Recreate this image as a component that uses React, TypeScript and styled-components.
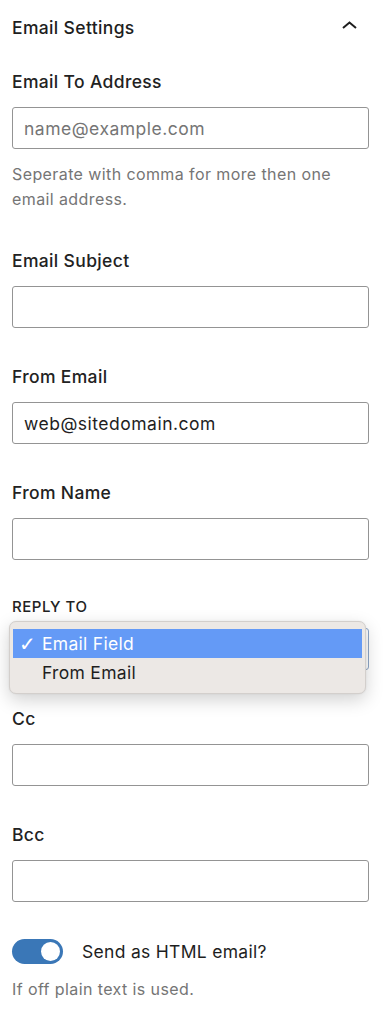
import React from "react";
import styled, { createGlobalStyle } from "styled-components";

const Global = createGlobalStyle`
  html, body { margin: 0; padding: 0; background: #fff; }
  body { font-family: Inter, "Noto Sans", "Liberation Sans", sans-serif; color: #1e1e1e; }
  * { box-sizing: border-box; }
`;

const Panel = styled.div`
  width: 385px;
  padding: 16px 16px 40px 12px;
  display: flex;
  flex-direction: column;
`;

const Header = styled.div`
  display: flex;
  align-items: center;
  justify-content: space-between;
  height: 24px;
  margin-bottom: 30px;
  padding-right: 12px;
`;

const Title = styled.h2`
  margin: 0;
  font-size: 17.5px;
  font-weight: 500;
  letter-spacing: 0.35px;
  line-height: 24px;
`;

const Fields = styled.div`
  display: flex;
  flex-direction: column;
  gap: 37px;
`;

const Group = styled.div`
  display: flex;
  flex-direction: column;
`;

const Label = styled.label<{ $upper?: boolean }>`
  display: block;
  font-size: ${(p) => (p.$upper ? "15px" : "17.5px")};
  font-weight: 500;
  letter-spacing: ${(p) => (p.$upper ? "0.5px" : "0.35px")};
  line-height: ${(p) => (p.$upper ? "20px" : "24px")};
  text-transform: ${(p) => (p.$upper ? "uppercase" : "none")};
  margin-bottom: ${(p) => (p.$upper ? "11px" : "13px")};
  color: #222;
`;

const Input = styled.input`
  width: 357px;
  height: 42px;
  border: 1px solid #949494;
  border-radius: 3px;
  padding: 0 11px;
  font-family: inherit;
  font-size: 17.5px;
  letter-spacing: 0.5px;
  color: #1e1e1e;
  background: #fff;
  outline: none;
  &::placeholder { color: #757575; }
`;

const Help = styled.p`
  margin: 13px 0 0;
  font-size: 16px;
  letter-spacing: 0.4px;
  line-height: 25px;
  color: #757575;
`;

const SelectWrap = styled.div`
  position: relative;
  width: 357px;
  height: 42px;
`;

const SelectBox = styled.div`
  width: 357px;
  height: 42px;
  border: 1px solid #8ea6c6;
  border-radius: 3px;
  background: #fff;
`;

const Menu = styled.div`
  position: absolute;
  top: -7px;
  left: -3px;
  width: 357px;
  padding: 7px 3px 6px;
  background: #ece8e5;
  border: 1px solid #d3cfcc;
  border-radius: 7px;
  box-shadow: 0 6px 18px rgba(0, 0, 0, 0.18), 0 0 2px rgba(0, 0, 0, 0.08);
  display: flex;
  flex-direction: column;
`;

const Option = styled.div<{ $active?: boolean }>`
  display: flex;
  align-items: center;
  height: 29px;
  padding-left: 6px;
  font-size: 17.5px;
  letter-spacing: 0.3px;
  color: ${(p) => (p.$active ? "#fff" : "#1e1e1e")};
  background: ${(p) => (p.$active ? "#649af6" : "transparent")};
`;

const Check = styled.span`
  display: inline-block;
  width: 23px;
  font-family: "DejaVu Sans", sans-serif;
  font-size: 20px;
  line-height: 1;
`;

const ToggleRow = styled.div`
  display: flex;
  align-items: center;
  gap: 19px;
  height: 25px;
`;

const Track = styled.span`
  position: relative;
  width: 51px;
  height: 25px;
  border-radius: 13px;
  background: #3a77b7;
  flex: none;
`;

const Knob = styled.span`
  position: absolute;
  top: 3px;
  right: 3px;
  width: 19px;
  height: 19px;
  border-radius: 50%;
  background: #fff;
`;

const ToggleText = styled.span`
  font-size: 17.5px;
  letter-spacing: 0.3px;
  line-height: 24px;
  color: #1e1e1e;
`;

const Chevron = () => (
  <svg width="15" height="10" viewBox="0 0 15 10" fill="none" style={{ marginTop: "-4px" }}>
    <polyline points="1,7 7.5,1.5 14,7" stroke="#1e1e1e" strokeWidth="2" />
  </svg>
);

export default function App() {
  return (
    <>
      <Global />
      <Panel>
        <Header>
          <Title>Email Settings</Title>
          <Chevron />
        </Header>
        <Fields>
          <Group>
            <Label>Email To Address</Label>
            <Input placeholder="name@example.com" />
            <Help>Seperate with comma for more then one email address.</Help>
          </Group>
          <Group>
            <Label>Email Subject</Label>
            <Input />
          </Group>
          <Group>
            <Label>From Email</Label>
            <Input defaultValue="web@sitedomain.com" />
          </Group>
          <Group>
            <Label>From Name</Label>
            <Input />
          </Group>
          <Group>
            <Label $upper>Reply To</Label>
            <SelectWrap>
              <SelectBox />
              <Menu>
                <Option $active>
                  <Check>✓</Check>Email Field
                </Option>
                <Option>
                  <Check />From Email
                </Option>
              </Menu>
            </SelectWrap>
          </Group>
          <Group>
            <Label>Cc</Label>
            <Input />
          </Group>
          <Group>
            <Label>Bcc</Label>
            <Input />
          </Group>
          <Group>
            <ToggleRow>
              <Track>
                <Knob />
              </Track>
              <ToggleText>Send as HTML email?</ToggleText>
            </ToggleRow>
            <Help>If off plain text is used.</Help>
          </Group>
        </Fields>
      </Panel>
    </>
  );
}
